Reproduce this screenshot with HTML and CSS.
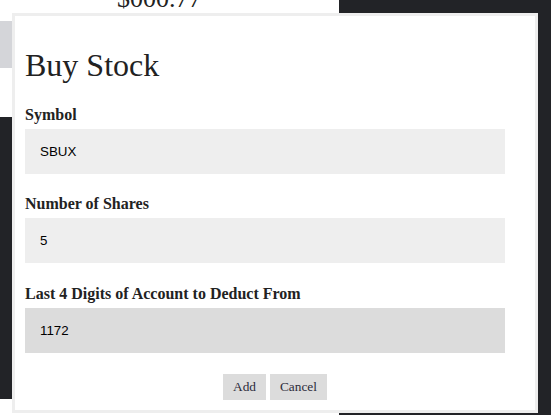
FILE: index.html
```html
<!DOCTYPE html>
<html>
<head>
<meta charset="utf-8">
<link rel="stylesheet" href="styles.css">
</head>
<body>
<div class="page">
  <div class="left">
    <div class="price-wrap"><div class="price">$000.77</div></div>
    <div class="gray-bar"></div>
    <div class="spacer"></div>
    <div class="dark-block"></div>
  </div>
  <div class="right"></div>
</div>

<div class="modal">
  <h1 class="title">Buy Stock</h1>
  <div class="field">
    <label class="label">Symbol</label>
    <div class="input">SBUX</div>
  </div>
  <div class="field">
    <label class="label">Number of Shares</label>
    <div class="input">5</div>
  </div>
  <div class="field">
    <label class="label">Last 4 Digits of Account to Deduct From</label>
    <div class="input focused">1172</div>
  </div>
  <div class="actions">
    <button class="btn">Add</button>
    <button class="btn">Cancel</button>
  </div>
</div>
</body>
</html>
```

FILE: styles.css
```css
html, body {
  margin: 0;
  padding: 0;
  height: 100%;
  overflow: hidden;
  font-family: "Liberation Serif", serif;
  color: #222;
}

.page {
  display: flex;
  height: 415px;
  background: #fff;
}

.left {
  width: 339px;
  display: flex;
  flex-direction: column;
}

.right {
  flex: 1;
  background: #222327;
}

.price-wrap {
  height: 21px;
  overflow: hidden;
}

.price {
  margin-top: -14px;
  padding-left: 117px;
  font-size: 26px;
  line-height: 26px;
  color: #222;
}

.gray-bar {
  height: 47px;
  background: #d4d5d9;
}

.spacer {
  height: 49px;
}

.dark-block {
  height: 282px;
  background: #222327;
}

.modal {
  position: absolute;
  top: 13px;
  left: 12px;
  width: 526px;
  box-sizing: border-box;
  border: 3px solid #eeeeee;
  background: #fff;
  padding: 10px;
}

.title {
  font-size: 32px;
  font-weight: normal;
  margin: 21.44px 0;
  line-height: normal;
  color: #222;
}

.field {
  margin-bottom: 21.44px;
}

.label {
  display: block;
  font-size: 16px;
  font-weight: bold;
  line-height: normal;
  margin-bottom: 5px;
  color: #222;
}

.input {
  width: 480px;
  height: 45px;
  box-sizing: border-box;
  padding: 0 15px;
  display: flex;
  align-items: center;
  background: #eeeeee;
  font-family: "Liberation Sans", Arial, sans-serif;
  font-size: 13.33px;
  color: #000;
}

.input.focused {
  background: #dcdcdc;
}

.actions {
  display: flex;
  justify-content: center;
  gap: 4px;
}

.btn {
  border: none;
  background: #dcdcdc;
  font-family: "Liberation Serif", serif;
  font-size: 13.33px;
  color: #2b2b3a;
  height: 26px;
  padding: 0 10px;
  margin: 0;
}
```
